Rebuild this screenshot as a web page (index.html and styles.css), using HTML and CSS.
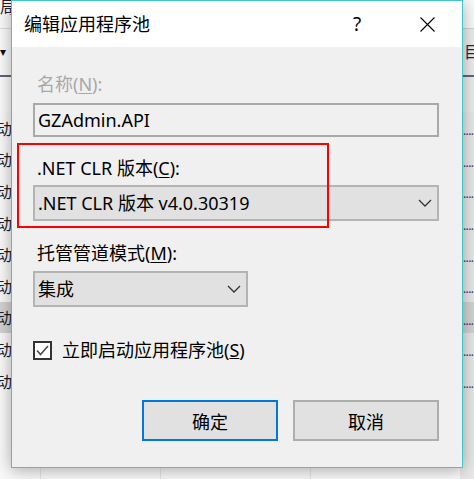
FILE: index.html
```html
<!DOCTYPE html>
<html lang="zh-CN">
<head>
<meta charset="utf-8">
<title>编辑应用程序池</title>
<link rel="stylesheet" href="styles.css">
</head>
<body>
<div class="backdrop">
  <div class="bd-head">
    <div class="bd-head-left">
      <div class="bd-cut">局</div>
      <div class="bd-caret">▾</div>
    </div>
    <div class="bd-head-right">
      <div class="bd-top"></div>
      <div class="bd-icon">目</div>
    </div>
  </div>
  <div class="bd-list">
    <div class="bd-row"><span class="bd-name">启动</span><span class="bd-more">......</span></div>
    <div class="bd-row"><span class="bd-name">启动</span><span class="bd-more">......</span></div>
    <div class="bd-row"><span class="bd-name">启动</span><span class="bd-more">......</span></div>
    <div class="bd-row"><span class="bd-name">启动</span><span class="bd-more">......</span></div>
    <div class="bd-row"><span class="bd-name">启动</span><span class="bd-more">......</span></div>
    <div class="bd-row"><span class="bd-name">启动</span><span class="bd-more">......</span></div>
    <div class="bd-row bd-sel"><span class="bd-name">启动</span><span class="bd-more">......</span></div>
    <div class="bd-row"><span class="bd-name">启动</span><span class="bd-more">......</span></div>
    <div class="bd-row"><span class="bd-name">启动</span><span class="bd-more">......</span></div>
  </div>
</div>

<div class="dialog">
  <div class="titlebar">
    <span class="title">编辑应用程序池</span>
    <span class="help">?</span>
    <svg class="close" viewBox="0 0 15 15" width="15" height="15"><path d="M0.5 0.5 L14.5 14.5 M14.5 0.5 L0.5 14.5" stroke="#000" stroke-width="1.1" fill="none"/></svg>
  </div>
  <div class="body">
    <div class="label disabled">名称(<u>N</u>):</div>
    <div class="textbox">GZAdmin.API</div>

    <div class="label gap-c">.NET CLR 版本(<u>C</u>):</div>
    <div class="select sel-wide">
      <span class="select-text">.NET CLR 版本 v4.0.30319</span>
      <svg class="chev" viewBox="0 0 14 8" width="14" height="8"><path d="M1 1 L7 7 L13 1" stroke="#333" stroke-width="1.3" fill="none"/></svg>
    </div>

    <div class="label gap-m">托管管道模式(<u>M</u>):</div>
    <div class="select sel-narrow">
      <span class="select-text">集成</span>
      <svg class="chev" viewBox="0 0 14 8" width="14" height="8"><path d="M1 1 L7 7 L13 1" stroke="#333" stroke-width="1.3" fill="none"/></svg>
    </div>

    <div class="check-row">
      <span class="checkbox"><svg viewBox="0 0 15 15" width="15" height="15"><path d="M2 7.5 L5.5 11.5 L13 3" stroke="#4a4a4a" stroke-width="1.6" fill="none"/></svg></span>
      <span class="check-label">立即启动应用程序池(<u>S</u>)</span>
    </div>

    <div class="buttons">
      <button class="btn btn-ok">确定</button>
      <button class="btn btn-cancel">取消</button>
    </div>

    <div class="annotation"></div>
  </div>
</div>
</body>
</html>
```

FILE: styles.css
```css
* { box-sizing: border-box; margin: 0; padding: 0; }

html, body {
  width: 474px;
  height: 479px;
  overflow: hidden;
}

body {
  position: relative;
  background: #f7f7f7;
  font-family: "Noto Sans", "Noto Sans CJK SC", sans-serif;
  color: #000;
}

/* ---------- background window ---------- */
.backdrop {
  position: absolute;
  inset: 0;
  display: flex;
  flex-direction: column;
  background: #f6f6f6;
}

.bd-head {
  height: 112px;
  display: flex;
  justify-content: space-between;
}

.bd-head-left {
  width: 14px;
  display: flex;
  flex-direction: column;
  background: #fbfbfb;
}

.bd-cut {
  height: 29px;
  font-size: 16px;
  line-height: 14px;
  color: #1e1e2e;
  overflow: hidden;
  border-bottom: 1px solid #dcdcdc;
}

.bd-caret {
  height: 48px;
  font-size: 12px;
  line-height: 46px;
  color: #111;
  border-bottom: 2px solid #60657c;
}

.bd-head-right {
  width: 14px;
  display: flex;
  flex-direction: column;
  background: #ececec;
}

.bd-top {
  height: 29px;
  background: #fafafa;
  border-bottom: 1px solid #d2d2d2;
}

.bd-icon {
  height: 48px;
  padding-left: 4px;
  font-size: 16px;
  line-height: 46px;
  color: #242455;
  overflow: hidden;
  border-bottom: 2px solid #60657c;
}

.bd-list {
  flex: 1;
  display: flex;
  flex-direction: column;
  background:
    linear-gradient(#e4e8ee, #e4e8ee) 40px 0 / 1px 100% no-repeat,
    linear-gradient(#e4e8ee, #e4e8ee) 160px 0 / 1px 100% no-repeat,
    linear-gradient(#e4e8ee, #e4e8ee) 310px 0 / 1px 100% no-repeat,
    linear-gradient(90deg, #f9f9f9 0 460px, #e8e8e8 460px);
}

.bd-row {
  height: 31.6px;
  display: flex;
  justify-content: space-between;
  align-items: center;
}

.bd-sel { background: #d3d3d3; }

.bd-name {
  width: 12px;
  display: flex;
  justify-content: flex-end;
  white-space: nowrap;
  font-size: 16px;
  color: #1d1d2a;
}

.bd-more {
  width: 11px;
  overflow: hidden;
  white-space: nowrap;
  font-size: 12px;
  letter-spacing: -0.6px;
  color: #3a3468;
  padding-top: 6px;
}

/* ---------- dialog ---------- */
.dialog {
  position: absolute;
  left: 11px;
  top: 0;
  width: 452px;
  height: 468px;
  border: 1px solid #3ec8cc;
  background: #f0f0f0;
  box-shadow: 0 2px 16px rgba(0, 0, 0, 0.33);
  display: flex;
  flex-direction: column;
}

.titlebar {
  height: 46px;
  background: #fff;
  display: flex;
  align-items: center;
  padding: 0 27px 0 12px;
}

.title {
  flex: 1;
  font-size: 18px;
  line-height: 24px;
}

.help {
  width: 9px;
  margin-right: 58px;
  font-size: 19px;
  line-height: 24px;
}

.close { display: block; }

.body {
  position: relative;
  flex: 1;
  display: flex;
  flex-direction: column;
  padding: 25px 23px 0 21px;
}

.label {
  padding-left: 4px;
  font-size: 18px;
  line-height: 24px;
  white-space: nowrap;
}

.label u { text-underline-offset: 2px; }

.disabled { color: #a8a8a8; }

.gap-c { margin-top: 19px; }
.gap-m { margin-top: 20px; }

.textbox {
  margin-top: 7px;
  height: 34px;
  border: 2px solid #a9a9a9;
  background: #f0f0f0;
  padding-left: 3px;
  font-size: 18px;
  line-height: 30px;
  white-space: nowrap;
}

.select {
  height: 36px;
  border: 2px solid #b4b4b4;
  background: #e1e1e1;
  display: flex;
  align-items: center;
  justify-content: space-between;
  padding: 0 5px 0 3px;
}

.sel-wide { margin-top: 5px; }
.sel-narrow { margin-top: 6px; width: 215px; }

.select-text {
  font-size: 18px;
  line-height: 24px;
  white-space: nowrap;
}

.chev { display: block; }

.check-row {
  margin-top: 31px;
  height: 24px;
  display: flex;
  align-items: center;
  gap: 10px;
}

.checkbox {
  width: 19px;
  height: 19px;
  border: 2px solid #333;
  background: #fff;
  display: flex;
  align-items: center;
  justify-content: center;
}

.checkbox svg { display: block; }

.check-label {
  font-size: 18px;
  line-height: 24px;
  white-space: nowrap;
}

.buttons {
  margin-top: 38px;
  display: flex;
  justify-content: flex-end;
  gap: 15px;
}

.btn {
  height: 41px;
  background: #e1e1e1;
  font-family: inherit;
  font-size: 18px;
  color: #000;
}

.btn-ok {
  width: 136px;
  border: 2px solid #0078d7;
}

.btn-cancel {
  width: 146px;
  border: 2px solid #adadad;
}

/* red highlight annotation drawn over the form */
.annotation {
  position: absolute;
  left: 5px;
  top: 96px;
  width: 312px;
  height: 85px;
  border: 2px solid #ff0000;
  pointer-events: none;
}
```
